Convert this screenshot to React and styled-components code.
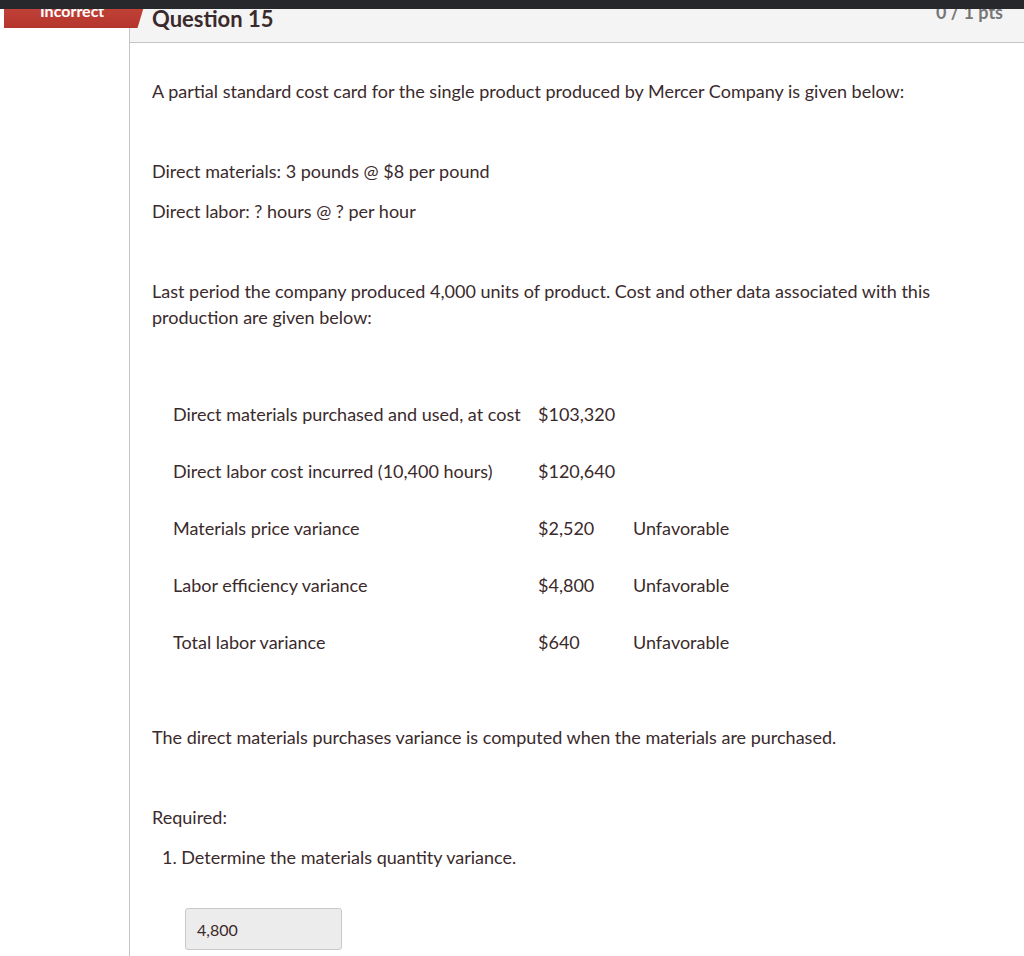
import React from 'react';
import styled, { createGlobalStyle } from 'styled-components';

const GlobalStyle = createGlobalStyle`
  html, body {
    margin: 0;
    padding: 0;
    background: #fff;
  }
  body {
    font-family: Lato, "Open Sans", sans-serif;
    color: #3b2a2c;
  }
`

const TopBar = styled.div`
  position: fixed;
  top: 0;
  left: 0;
  right: 0;
  height: 9px;
  background: #26282c;
  z-index: 10;
`

const Page = styled.div`
  position: relative;
  display: flex;
  min-height: 956px;
`

const Gutter = styled.div`
  width: 129px;
  flex-shrink: 0;
`

const Question = styled.section`
  flex: 1;
  border-left: 1px solid #c4c4c4;
`

const Header = styled.header`
  display: flex;
  justify-content: space-between;
  align-items: flex-start;
  height: 43px;
  box-sizing: border-box;
  padding: 6px 21px 0 22px;
  background: #f4f4f4;
  border-bottom: 1px solid #c4c4c4;
`

const Title = styled.h2`
  margin: 0;
  font-size: 22px;
  line-height: 26px;
  font-weight: 700;
  color: #3b2a2c;
`

const Points = styled.div`
  margin-top: -4px;
  font-size: 18px;
  line-height: 20px;
  font-weight: 700;
  color: #777;
`

const Banner = styled.div`
  position: absolute;
  top: 0;
  left: 4px;
  width: 142px;
  height: 28px;
  box-sizing: border-box;
  padding: 1px 0 0 36px;
  background: linear-gradient(#c4463b, #b5352c);
  clip-path: polygon(0 0, 100% 0, 94% 100%, 0 100%);
  color: #fff;
  font-size: 16px;
  font-weight: 700;
  z-index: 5;
`

const Body = styled.div`
  padding: 35px 22px 0 22px;
`

const Para = styled.p`
  margin: ${p => (p.$gap === 'big' ? '54px' : p.$gap === 'small' ? '14px' : '0')} 0 0;
  padding-left: ${p => p.$indent || 0}px;
  font-size: 18px;
  line-height: 26px;
  max-width: 790px;
`

const Table = styled.div`
  display: grid;
  grid-template-columns: 365px 95px auto;
  grid-auto-rows: 57px;
  align-items: center;
  margin: 55px 0 0 21px;
  font-size: 18px;
  line-height: 26px;
`

const Answer = styled.div`
  display: flex;
  align-items: center;
  width: 157px;
  height: 42px;
  box-sizing: border-box;
  margin: 38px 0 0 33px;
  padding-left: 11px;
  background: #ececec;
  border: 1px solid #c9c9c9;
  border-radius: 3px;
  font-size: 16px;
  color: #3b2a2c;
`

const rows = [
  ['Direct materials purchased and used, at cost', '$103,320', ''],
  ['Direct labor cost incurred (10,400 hours)', '$120,640', ''],
  ['Materials price variance', '$2,520', 'Unfavorable'],
  ['Labor efficiency variance', '$4,800', 'Unfavorable'],
  ['Total labor variance', '$640', 'Unfavorable'],
]

export default function App() {
  return (
    <>
      <GlobalStyle />
      <TopBar />
      <Page>
        <Banner>Incorrect</Banner>
        <Gutter />
        <Question>
          <Header>
            <Title>Question 15</Title>
            <Points>0 / 1 pts</Points>
          </Header>
          <Body>
            <Para>A partial standard cost card for the single product produced by Mercer Company is given below:</Para>
            <Para $gap="big">Direct materials: 3 pounds @ $8 per pound</Para>
            <Para $gap="small">Direct labor: ? hours @ ? per hour</Para>
            <Para $gap="big">
              Last period the company produced 4,000 units of product. Cost and other data associated with this production are given below:
            </Para>
            <Table>
              {rows.map(([label, amount, note]) => (
                <React.Fragment key={label}>
                  <span>{label}</span>
                  <span>{amount}</span>
                  <span>{note}</span>
                </React.Fragment>
              ))}
            </Table>
            <Para $gap="big">The direct materials purchases variance is computed when the materials are purchased.</Para>
            <Para $gap="big">Required:</Para>
            <Para $gap="small" $indent={10}>1. Determine the materials quantity variance.</Para>
            <Answer>4,800</Answer>
          </Body>
        </Question>
      </Page>
    </>
  )
}
